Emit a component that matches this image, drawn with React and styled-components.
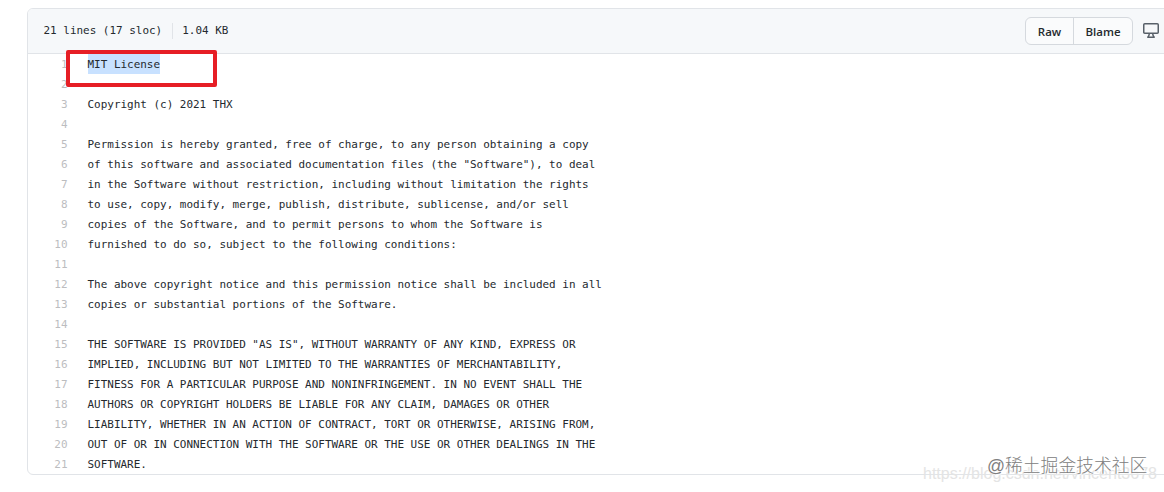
import React from 'react'
import styled, { createGlobalStyle } from 'styled-components'

const GlobalStyle = createGlobalStyle`
  * {
    box-sizing: border-box;
  }

  body {
    margin: 0;
    background: #ffffff;
    color: #24292e;
    overflow: hidden;
  }
`

const mono = `'DejaVu Sans Mono', monospace`

const Page = styled.main`
  position: relative;
  width: 1164px;
  height: 492px;
  padding: 8px 0 0 27px;
  overflow: hidden;
`

const FileBox = styled.section`
  width: 1160px;
  border: 1px solid #e1e4e8;
  border-radius: 6px;
  overflow: hidden;
`

const FileHeader = styled.header`
  display: flex;
  align-items: center;
  height: 45px;
  padding-left: 15.5px;
  background: #f6f8fa;
  border-bottom: 1px solid #e1e4e8;

  > svg {
    flex: none;
    margin-bottom: 3px;
  }
`

const FileInfo = styled.div`
  display: flex;
  align-items: center;
  flex: none;
  width: 981.5px;
  font-family: ${mono};
  font-size: 10.96px;
  line-height: 16px;
  white-space: pre;
`

const InfoDivider = styled.span`
  width: 1px;
  height: 16px;
  margin: 0 9.5px 0 9.5px;
  background: #e1e4e8;
`

const ButtonGroup = styled.div`
  display: flex;
  flex: none;
  width: 108px;
  height: 28px;
  margin-right: 10px;
  border: 1px solid #d5d9de;
  border-radius: 6px;
  background: #fafbfc;
  overflow: hidden;
`

const GroupButton = styled.button`
  width: ${props => props.$width};
  padding: 1px 0 0;
  border: none;
  border-right: ${props => props.$divided ? '1px solid #d5d9de' : 'none'};
  background: transparent;
  color: #24292e;
  font-family: 'Open Sans', sans-serif;
  font-size: 11.5px;
  font-weight: 600;
  line-height: 25px;
  cursor: pointer;
`

const CodeLines = styled.div`
  font-family: ${mono};
  font-size: 10.96px;
  line-height: 22px;
`

const CodeRow = styled.div`
  display: flex;
  height: 20px;
`

const LineNumber = styled.span`
  width: 39.5px;
  margin-right: 20px;
  color: #bcbdbf;
  text-align: right;
`

const LineText = styled.span`
  white-space: pre;
`

const Selected = styled.span`
  display: inline-block;
  height: 20px;
  background: #c8e1ff;
`

const RedFrame = styled.div`
  position: absolute;
  top: 50px;
  left: 66px;
  width: 151px;
  height: 37px;
  border: 4px solid #e61e25;
  border-radius: 2px;
`

const SourceMark = styled.span`
  position: absolute;
  top: 464px;
  left: 923px;
  color: #e4e4e4;
  font-family: 'Liberation Sans', sans-serif;
  font-size: 16px;
  line-height: 20px;
  white-space: nowrap;
`

const CommunityMark = styled.span`
  position: absolute;
  top: 454px;
  left: 987px;
  color: #808080;
  font-family: 'Liberation Sans', 'Noto Sans CJK SC', sans-serif;
  font-size: 17.8px;
  font-weight: 300;
  line-height: 24px;
  text-shadow: 0 0 2px #ffffff, 1px 1px 1px #ffffff, -1px -1px 1px #ffffff;
  white-space: nowrap;
`

const lines = [
  'MIT License',
  '',
  'Copyright (c) 2021 THX',
  '',
  'Permission is hereby granted, free of charge, to any person obtaining a copy',
  'of this software and associated documentation files (the "Software"), to deal',
  'in the Software without restriction, including without limitation the rights',
  'to use, copy, modify, merge, publish, distribute, sublicense, and/or sell',
  'copies of the Software, and to permit persons to whom the Software is',
  'furnished to do so, subject to the following conditions:',
  '',
  'The above copyright notice and this permission notice shall be included in all',
  'copies or substantial portions of the Software.',
  '',
  'THE SOFTWARE IS PROVIDED "AS IS", WITHOUT WARRANTY OF ANY KIND, EXPRESS OR',
  'IMPLIED, INCLUDING BUT NOT LIMITED TO THE WARRANTIES OF MERCHANTABILITY,',
  'FITNESS FOR A PARTICULAR PURPOSE AND NONINFRINGEMENT. IN NO EVENT SHALL THE',
  'AUTHORS OR COPYRIGHT HOLDERS BE LIABLE FOR ANY CLAIM, DAMAGES OR OTHER',
  'LIABILITY, WHETHER IN AN ACTION OF CONTRACT, TORT OR OTHERWISE, ARISING FROM,',
  'OUT OF OR IN CONNECTION WITH THE SOFTWARE OR THE USE OR OTHER DEALINGS IN THE',
  'SOFTWARE.',
]

function DesktopIcon() {
  return (
    <svg width="16" height="16" viewBox="0 0 16 16" fill="#586069">
      <path fillRule="evenodd" d="M1.75 2.5h12.5a.25.25 0 01.25.25v7.5a.25.25 0 01-.25.25H1.75a.25.25 0 01-.25-.25v-7.5a.25.25 0 01.25-.25zM14.25 1H1.75A1.75 1.75 0 000 2.75v7.5C0 11.216.784 12 1.75 12h3.727c-.1 1.041-.52 1.872-1.292 2.757A.75.75 0 004.75 16h6.5a.75.75 0 00.565-1.243c-.772-.885-1.193-1.716-1.292-2.757h3.727A1.75 1.75 0 0016 10.25v-7.5A1.75 1.75 0 0014.25 1zM9.018 12H6.982a5.72 5.72 0 01-.765 2.5h3.566a5.72 5.72 0 01-.765-2.5z" />
    </svg>
  )
}

function App() {
  return (
    <>
      <GlobalStyle />
      <Page>
        <FileBox>
          <FileHeader>
            <FileInfo>
              <span>21 lines (17 sloc)</span>
              <InfoDivider />
              <span>1.04 KB</span>
            </FileInfo>
            <ButtonGroup>
              <GroupButton $width="48px" $divided>Raw</GroupButton>
              <GroupButton $width="58px">Blame</GroupButton>
            </ButtonGroup>
            <DesktopIcon />
          </FileHeader>
          <CodeLines>
            {lines.map((line, index) => (
              <CodeRow key={index}>
                <LineNumber>{index + 1}</LineNumber>
                <LineText>{index === 0 ? <Selected>{line}</Selected> : line}</LineText>
              </CodeRow>
            ))}
          </CodeLines>
        </FileBox>
        <RedFrame />
        <SourceMark>https://blog.csdn.net/vincent3678</SourceMark>
        <CommunityMark>@稀土掘金技术社区</CommunityMark>
      </Page>
    </>
  )
}

export default App
